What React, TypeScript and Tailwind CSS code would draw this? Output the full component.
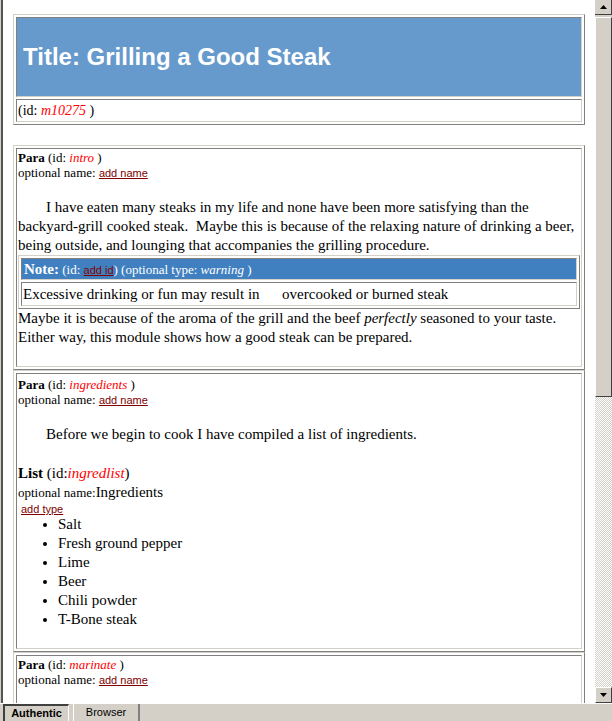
import React from 'react'

const serif = "font-['Liberation_Serif','Times_New_Roman',serif]"
const sans = "font-['Liberation_Sans',Arial,sans-serif]"

function Frame({ children, className = '' }: { children: React.ReactNode; className?: string }) {
  return (
    <div
      className={`border border-t-[#d4d0c8] border-l-[#d4d0c8] border-r-[#808080] border-b-[#808080] p-[2px] flex flex-col gap-[2px] ${className}`}
    >
      {children}
    </div>
  )
}

function Cell({ children, className = '' }: { children: React.ReactNode; className?: string }) {
  return (
    <div
      className={`border border-t-[#808080] border-l-[#808080] border-r-[#d4d0c8] border-b-[#d4d0c8] p-px ${className}`}
    >
      {children}
    </div>
  )
}

function AddLink({ children }: { children: React.ReactNode }) {
  return <span className={`${sans} text-[11px] text-[#800000] underline`}>{children}</span>
}

function ParaHead({ id }: { id: string }) {
  return (
    <div className="text-[13px] leading-[15px]">
      <div>
        <b>Para</b> (id: <i className="text-[#ff0000]">{id}</i> )
      </div>
      <div>
        optional name: <AddLink>add name</AddLink>
      </div>
    </div>
  )
}

function Note() {
  return (
    <Frame>
      <Cell className="h-[22px] bg-[#4080c0] text-white leading-[18px] whitespace-nowrap">
        <b className="text-[15px] pl-px">Note:</b>
        <span className="text-[13px]">
          {' '}(id: <AddLink>add id</AddLink>) (optional type: <i>warning</i> )
        </span>
      </Cell>
      <Cell className="h-[24px] text-[15px] leading-[20px] whitespace-pre">
        {'Excessive drinking or fun may result in      overcooked or burned steak'}
      </Cell>
    </Frame>
  )
}

function Scrollbar() {
  return (
    <div className="w-[17px] h-full flex flex-col bg-[#d4d0c8]">
      <div className="h-[15px] flex items-center justify-center border-b border-b-[#404040] border-r border-r-[#404040] bg-[#d4d0c8]">
        <svg width="7" height="4" viewBox="0 0 7 4">
          <path d="M3.5 0 L7 4 L0 4 Z" fill="#000" />
        </svg>
      </div>
      <div className="h-[2px] bg-[#d4d0c8]" />
      <div className="h-[380px] border-t border-l border-t-white border-l-white border-r border-b border-r-[#404040] border-b-[#404040] bg-[#d4d0c8]" />
      <div className="flex-1 bg-[repeating-conic-gradient(#d4d0c8_0_25%,#ffffff_0_50%)] bg-[length:2px_2px]" />
      <div className="h-[16px] flex items-center justify-center border-t border-l border-t-white border-l-white border-r border-b border-r-[#404040] border-b-[#404040] bg-[#d4d0c8]">
        <svg width="7" height="4" viewBox="0 0 7 4">
          <path d="M0 0 L7 0 L3.5 4 Z" fill="#000" />
        </svg>
      </div>
    </div>
  )
}

export default function App() {
  const items = ['Salt', 'Fresh ground pepper', 'Lime', 'Beer', 'Chili powder', 'T-Bone steak']
  return (
    <div className={`w-[612px] h-[721px] flex flex-col overflow-hidden bg-white text-black ${serif}`}>
      <div className="h-[703px] flex">
        <div className="w-[3px] h-full flex">
          <div className="w-px bg-[#d4d0c8]" />
          <div className="w-[2px] bg-[#555555]" />
        </div>
        <div className="flex-1 overflow-hidden pl-[10px] pr-[10px] pt-[14px]">
          <Frame>
            <Cell className="bg-[#6699cc] h-[80px] flex items-center pl-[6px]">
              <span className={`${sans} font-bold text-[24px] text-white`}>Title: Grilling a Good Steak</span>
            </Cell>
            <Cell className="text-[14px] leading-[19px]">
              (id: <i className="text-[#ff0000]">m10275</i> )
            </Cell>
          </Frame>

          <Frame className="mt-[20px]">
            <Cell className="pb-[19px]">
              <ParaHead id="intro" />
              <p className="mt-[17px] text-[15px] leading-[19px] whitespace-nowrap">
                <span className="pl-[28px]">I have eaten many steaks in my life and none have been more satisfying than the</span>
                <br />
                backyard-grill cooked steak.{'\u00a0 '}Maybe this is because of the relaxing nature of drinking a beer,
                <br />
                being outside, and lounging that accompanies the grilling procedure.
              </p>
              <Note />
              <p className="text-[15px] leading-[19px] whitespace-nowrap">
                Maybe it is because of the aroma of the grill and the beef <i>perfectly</i> seasoned to your taste.
                <br />
                Either way, this module shows how a good steak can be prepared.
              </p>
            </Cell>
          </Frame>

          <Frame>
            <Cell className="pt-[3px] pb-[19px]">
              <ParaHead id="ingredients" />
              <p className="mt-[17px] indent-[28px] text-[15px] leading-[19px]">
                Before we begin to cook I have compiled a list of ingredients.
              </p>
              <div className="mt-[20px] text-[15px] leading-[19px]">
                <b>List</b> (id:<i className="text-[#ff0000]">ingredlist</i>)
              </div>
              <div className="leading-[18px]">
                <span className="text-[13px]">optional name:</span>
                <span className="text-[15px]">Ingredients</span>
              </div>
              <div className="pl-[3px] leading-[11px]">
                <AddLink>add type</AddLink>
              </div>
              <ul className="list-disc pl-[40px] text-[15px] leading-[19px]">
                {items.map((it) => (
                  <li key={it}>{it}</li>
                ))}
              </ul>
            </Cell>
          </Frame>

          <Frame>
            <Cell className="pb-[19px]">
              <ParaHead id="marinate" />
            </Cell>
          </Frame>
        </div>
        <Scrollbar />
      </div>
      <div className={`h-[18px] bg-[#d4d0c8] border-t border-t-white flex items-stretch pl-[3px] ${sans}`}>
        <div className="w-[66px] border-t-2 border-l-2 border-t-[#404040] border-l-[#404040] border-r border-r-white flex items-center justify-center font-bold text-[11px] leading-none">
          Authentic
        </div>
        <div className="w-[4px]" />
        <div className="w-[67px] border-l border-l-white border-r-2 border-r-[#808080] flex items-center justify-center text-[11px] leading-none">
          Browser
        </div>
      </div>
    </div>
  )
}
